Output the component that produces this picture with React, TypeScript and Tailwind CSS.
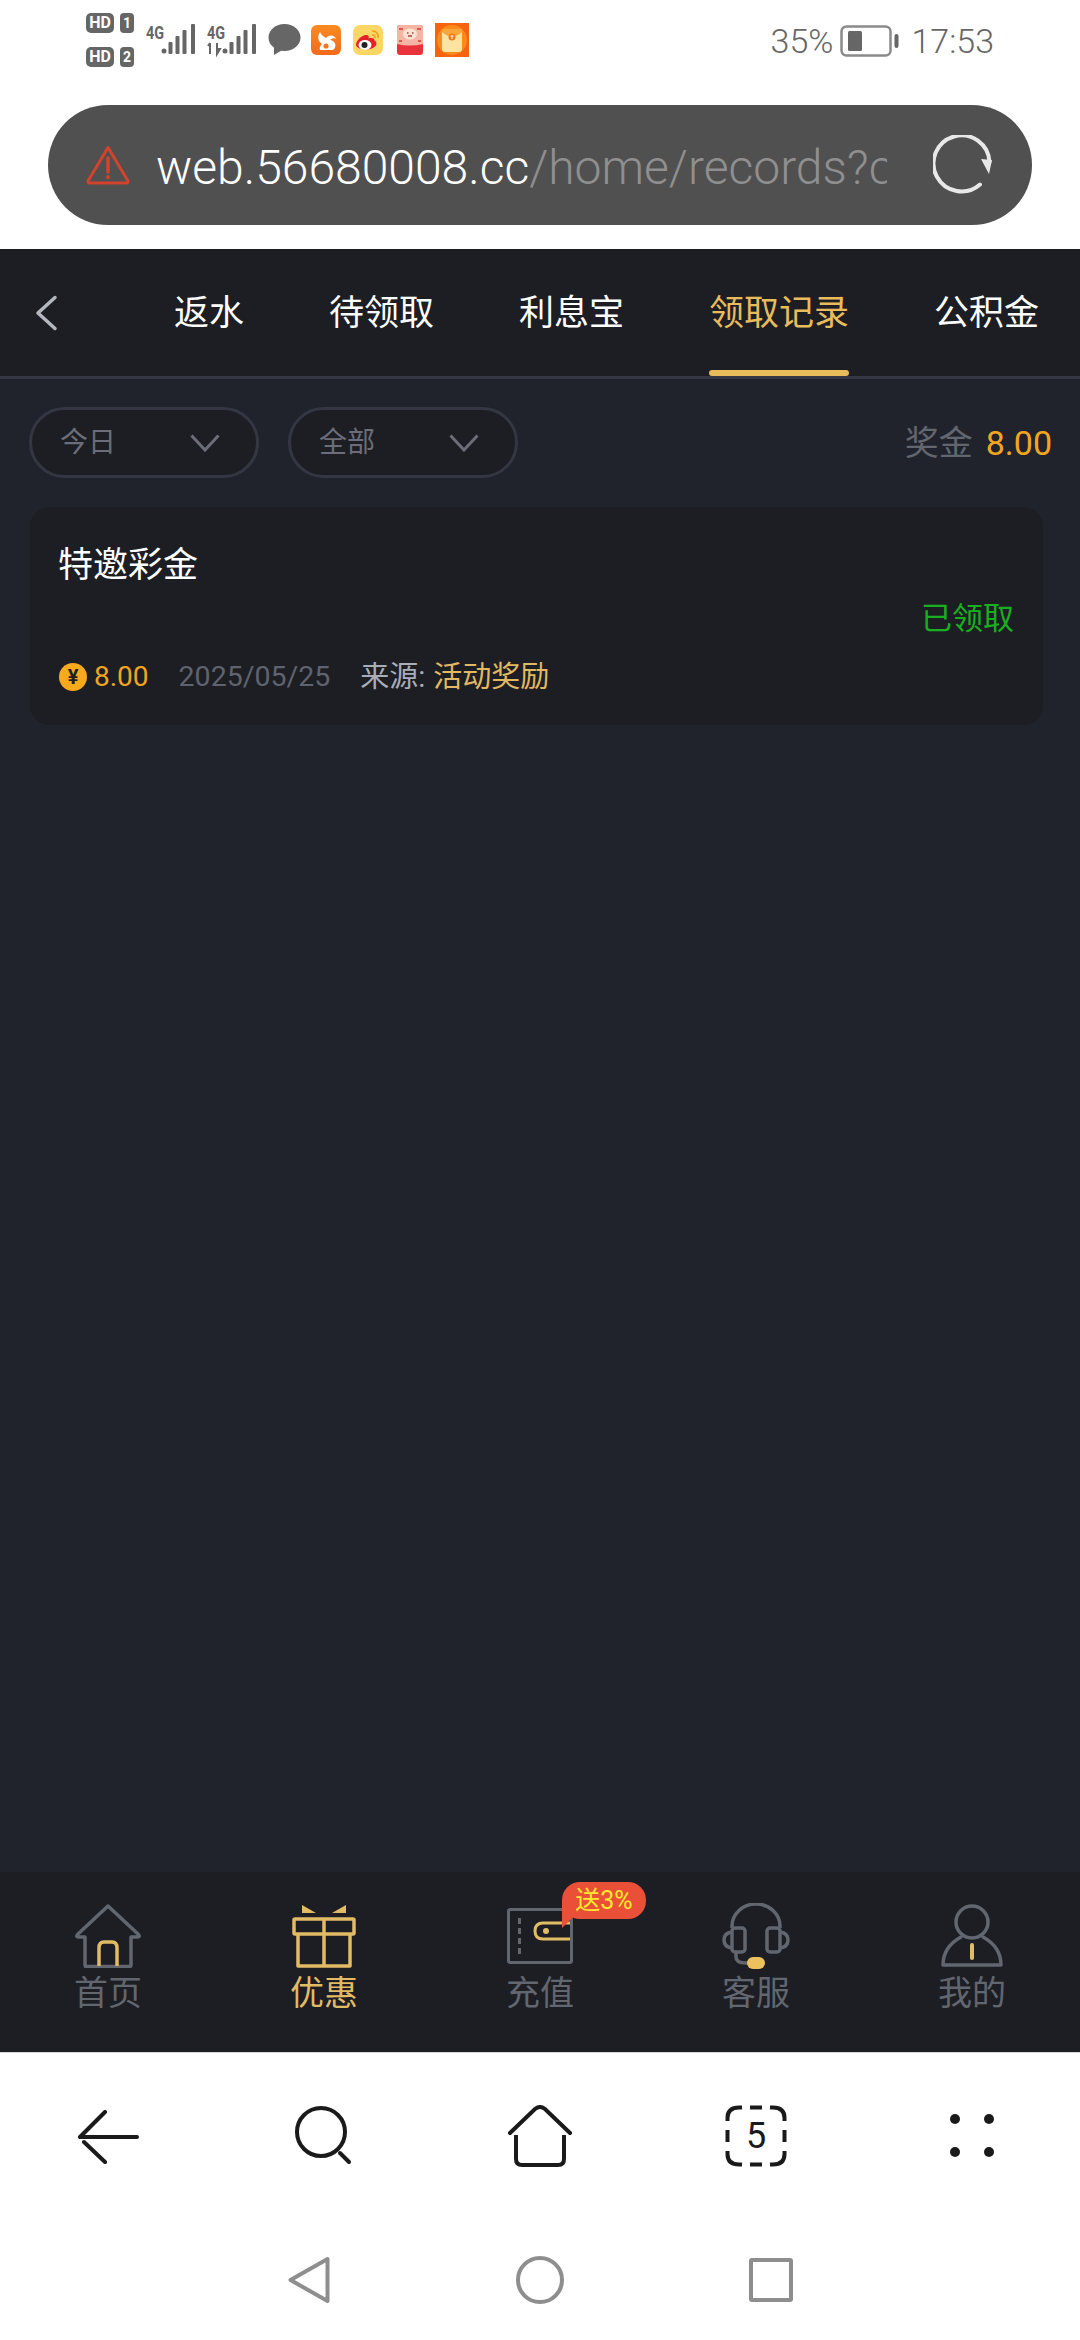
import type { ReactNode } from 'react';

const TABS = [
  { label: '返水' },
  { label: '待领取' },
  { label: '利息宝' },
  { label: '领取记录', active: true },
  { label: '公积金' },
];

function SimTag({ sim }: { sim: string }) {
  return (
    <div className="flex gap-[6px]">
      <span className="flex h-[20px] w-[28px] items-center justify-center rounded-[5px] bg-[#666666] text-[16px] font-bold leading-none text-white">
        HD
      </span>
      <span className="flex h-[20px] w-[14px] items-center justify-center rounded-[4px] bg-[#666666] text-[14px] font-bold leading-none text-white">
        {sim}
      </span>
    </div>
  );
}

function Signal({ arrows }: { arrows?: boolean }) {
  return (
    <svg width="50" height="38" viewBox="0 0 50 38" className="text-[#666666]">
      <text x="0" y="18" fontSize="19" fontWeight="700" fill="currentColor" textLength="18" lengthAdjust="spacingAndGlyphs">
        4G
      </text>
      {arrows && <path d="M3 22v11M1 25l2-3M10 22v11l3-5h-3" stroke="currentColor" strokeWidth="2" fill="none" />}
      <circle cx="18" cy="30" r="2.5" fill="currentColor" />
      <rect x="22.5" y="21" width="4" height="12" rx="1" fill="currentColor" />
      <rect x="29.5" y="15" width="4" height="18" rx="1" fill="currentColor" />
      <rect x="36.5" y="9" width="4" height="24" rx="1" fill="currentColor" />
      <rect x="45" y="3" width="4" height="30" rx="1" fill="currentColor" />
    </svg>
  );
}

function MessageBubble() {
  return (
    <svg width="33" height="32" viewBox="0 0 33 32">
      <ellipse cx="16.5" cy="13.5" rx="16" ry="13.5" fill="#666666" />
      <path d="M6 22l0 9 10-6z" fill="#666666" />
    </svg>
  );
}

function UcLogo() {
  return (
    <svg width="30" height="30" viewBox="0 0 30 30">
      <defs>
        <linearGradient id="uc" x1="0" y1="0" x2="0" y2="1">
          <stop offset="0" stopColor="#f98b22" />
          <stop offset="1" stopColor="#f26a1b" />
        </linearGradient>
      </defs>
      <rect width="30" height="30" rx="6" fill="url(#uc)" />
      <path d="M9 7c-3 5-2 9 2 12-2 2-3 4-2 6h13c4-3 3-9-3-10 2-2 5-2 6-1-1-4-7-5-10-1-2-1-5-3-6-6z" fill="#fff" />
      <circle cx="15" cy="21" r="2.6" fill="#f4761e" />
    </svg>
  );
}

function WeiboLogo() {
  return (
    <svg width="30" height="30" viewBox="0 0 30 30">
      <rect width="30" height="30" rx="7" fill="#fdd766" />
      <path d="M3 20c0-5 7-11 11-10 2 .5 2 2 1.500 3.500 3-1 6-.5 6 2 1 .5 2 1.500 2 3 0 3-5 6-10 6s-10-1.500-10.500-4.500z" fill="#e6202a" />
      <ellipse cx="12" cy="20" rx="6.500" ry="5" fill="#fff" />
      <circle cx="11.500" cy="20" r="3" fill="#222" />
      <path d="M19 6c4-.5 7 3 6 7M19 10c2-.3 3.500 1.200 3 3" stroke="#f29a1f" strokeWidth="1.600" fill="none" />
    </svg>
  );
}

function PacketLogo() {
  return (
    <svg width="26" height="30" viewBox="0 0 26 30">
      <rect width="26" height="30" rx="3" fill="#e9333c" />
      <path d="M0 3a3 3 0 0 1 3-3h20a3 3 0 0 1 3 3v16q-13 3-26 0z" fill="#f4b5a4" />
      <ellipse cx="13" cy="9" rx="7" ry="5.500" fill="#fbe3d4" />
      <path d="M10 8h1.500M15 8h1.500M11 11h4" stroke="#a8443a" strokeWidth="1.400" />
      <path d="M2 4h4M20 4h4M2 16h3M21 16h3" stroke="#d33a35" strokeWidth="1.600" />
    </svg>
  );
}

function EnvelopeLogo() {
  return (
    <svg width="34" height="34" viewBox="0 0 34 34">
      <rect width="34" height="34" fill="#f6640f" />
      <circle cx="17" cy="17" r="15" fill="#f98a1c" />
      <rect x="7" y="6" width="20" height="23" rx="3" fill="#fde3a2" />
      <path d="M7 9q10 9 20 0V8a2 2 0 0 0-2-2H9a2 2 0 0 0-2 2z" fill="#f8a53a" />
      <circle cx="17" cy="14" r="3.500" fill="#ee7a16" />
      <path d="M15.500 13h3M17 13v3" stroke="#fff" strokeWidth="1" />
    </svg>
  );
}

function StatusBar() {
  return (
    <div className="flex h-[80px] items-center justify-between pl-[86px] pr-[86px]">
      <div className="flex items-center">
        <div className="flex flex-col gap-[14px]">
          <SimTag sim="1" />
          <SimTag sim="2" />
        </div>
        <div className="ml-[12px] flex items-center gap-[11px]">
          <Signal />
          <Signal arrows />
        </div>
        <div className="ml-[11px] flex items-center">
          <MessageBubble />
          <div className="ml-[10px]"><UcLogo /></div>
          <div className="ml-[12px]"><WeiboLogo /></div>
          <div className="ml-[14px]"><PacketLogo /></div>
          <div className="ml-[12px]"><EnvelopeLogo /></div>
        </div>
      </div>
      <div className="mt-[2px] flex items-center text-[34px] font-light leading-none text-[#666666]">
        <span>35%</span>
        <svg width="59" height="32" viewBox="0 0 59 32" className="ml-[7px]">
          <rect x="1.500" y="1.500" width="49" height="29" rx="5" fill="none" stroke="#8a8a8a" strokeWidth="2.500" />
          <rect x="8" y="6" width="14" height="20" rx="1.500" fill="#666666" />
          <rect x="54.500" y="9" width="4" height="14" rx="2" fill="#666666" />
        </svg>
        <span className="ml-[12px]">17:53</span>
      </div>
    </div>
  );
}

function AddressBar() {
  return (
    <div className="px-[48px] pb-[24px] pt-[25px]">
      <div className="flex h-[120px] items-center rounded-full bg-[#505050] pl-[38px] pr-[39px]">
        <svg width="44" height="40" viewBox="0 0 44 40" className="shrink-0">
          <path d="M22 2.500 42 36a1.500 1.500 0 0 1-1.300 2H3.300A1.500 1.500 0 0 1 2 36z" fill="none" stroke="#d2432e" strokeWidth="3" strokeLinejoin="round" />
          <path d="M22 13v14" stroke="#d2432e" strokeWidth="3.500" strokeLinecap="round" />
          <circle cx="22" cy="32" r="2" fill="#d2432e" />
        </svg>
        <div className="ml-[26px] mt-[5px] w-[731px] overflow-hidden whitespace-nowrap text-[48px] font-light leading-[56px]">
          <span className="text-white">web.56680008.cc</span>
          <span className="text-[#8f8f8f]">/home/records?c</span>
        </div>
        <svg width="60" height="60" viewBox="0 0 60 60" className="ml-auto shrink-0">
          <path d="M47 49.500A28 28 0 1 1 56.500 27" fill="none" stroke="#e8e8e8" strokeWidth="4" strokeLinecap="round" />
          <path d="M48 24l11 1-3 14z" fill="#e8e8e8" />
        </svg>
      </div>
    </div>
  );
}

function TabHeader() {
  return (
    <header className="flex h-[130px] shrink-0 items-stretch overflow-hidden border-b-[3px] border-[#343743] bg-[#1c1e24]">
      <div className="flex w-[174px] shrink-0 items-center pl-[35px]">
        <svg width="23" height="36" viewBox="0 0 23 36">
          <path d="M20 2.500 3 18l17 15.500" fill="none" stroke="#b4b7bf" strokeWidth="3.500" strokeLinecap="round" strokeLinejoin="round" />
        </svg>
      </div>
      <nav className="flex gap-[85px]">
        {TABS.map((tab) => (
          <div
            key={tab.label}
            className={`relative flex shrink-0 items-center whitespace-nowrap pt-[2px] text-[35px] leading-none ${
              tab.active ? 'text-[#e8bb5b]' : 'text-white'
            }`}
          >
            {tab.label}
            {tab.active && <span className="absolute bottom-0 left-0 h-[6px] w-full rounded-full bg-[#e8bb5b]" />}
          </div>
        ))}
      </nav>
    </header>
  );
}

function FilterPill({ label }: { label: string }) {
  return (
    <div className="flex h-[71px] w-[230px] items-center justify-between rounded-full border-[3px] border-[#343743] bg-[#1c1e24] pl-[28px] pr-[36px]">
      <span className="text-[28px] leading-none text-[#6b6e78]">{label}</span>
      <svg width="30" height="18" viewBox="0 0 30 18">
        <path d="M1.500 1.500 15 16 28.500 1.500" fill="none" stroke="#6b6e78" strokeWidth="3" />
      </svg>
    </div>
  );
}

function RecordCard() {
  return (
    <div className="ml-[30px] mr-[37px] mt-[29px] h-[218px] rounded-[20px] bg-[#1c1e24] pl-[28px] pr-[29px] pt-[39px]">
      <div className="text-[35px] leading-[40px] text-white">特邀彩金</div>
      <div className="mt-[13px] text-right text-[31px] leading-[40px] text-[#19b01f]">已领取</div>
      <div className="mt-[20px] flex items-center text-[28px] leading-[36px]">
        <span className="ml-[1px] flex h-[28px] w-[28px] items-center justify-center rounded-full bg-[#f9a91c] text-[20px] font-bold leading-none text-[#1c1e24]">
          ¥
        </span>
        <span className="ml-[7px] text-[#f2a51f]">8.00</span>
        <span className="ml-[30px] text-[28.5px] text-[#5f636d]">2025/05/25</span>
        <span className="ml-[30px] text-[29px] text-[#a9adb8]">来源:</span>
        <span className="ml-[8px] text-[29px] text-[#e2b862]">活动奖励</span>
      </div>
    </div>
  );
}

function NavItem({ label, active, children }: { label: string; active?: boolean; children: ReactNode }) {
  return (
    <div className="relative flex flex-col items-center pt-[32px]">
      <div className="flex h-[64px] items-center justify-center">{children}</div>
      <span className={`mt-[5px] text-[34px] leading-[40px] ${active ? 'text-[#e2bb65]' : 'text-[#62666f]'}`}>{label}</span>
    </div>
  );
}

function BottomTabs() {
  const grey = '#62666f';
  const gold = '#e2bb65';
  return (
    <div className="grid h-[180px] shrink-0 grid-cols-5 bg-[#1c1e24]">
      <NavItem label="首页">
        <svg width="68" height="64" viewBox="0 0 68 64">
          <path d="M11 61V33H4.500q-3 0-1-2.500L34 2l30.500 28.500q2 2.500-1 2.500H57v28q0 1.500-1.500 1.500h-43Q11 63 11 61z" fill="none" stroke={grey} strokeWidth="3.500" strokeLinejoin="round" />
          <path d="M25 62V44q0-6 5-6h8q5 0 5 6v18" fill="none" stroke={gold} strokeWidth="3.500" />
        </svg>
      </NavItem>
      <NavItem label="优惠" active>
        <svg width="64" height="64" viewBox="0 0 64 64">
          <path d="M10 9V1l14 8zM54 9V1L40 9z" fill={gold} />
          <rect x="2" y="15" width="60" height="15" rx="1" fill="none" stroke={gold} strokeWidth="3.500" />
          <path d="M6 30v32h52V30M32 15v47" fill="none" stroke={gold} strokeWidth="3.500" strokeLinejoin="round" />
        </svg>
      </NavItem>
      <NavItem label="充值">
        <svg width="66" height="56" viewBox="0 0 66 56">
          <rect x="1.500" y="1.500" width="63" height="53" rx="2" fill="none" stroke={grey} strokeWidth="3" />
          <path d="M12.500 10v36" stroke={grey} strokeWidth="3" strokeDasharray="6 4" />
          <path d="M63 15H36q-8 0-8 8t8 8h27" fill="none" stroke={gold} strokeWidth="3" />
          <circle cx="39" cy="23" r="3" fill={gold} />
        </svg>
        <span className="absolute left-[130px] top-[10px] flex h-[37px] w-[84px] items-center justify-center rounded-[18px] bg-[#ea4f38] text-[25px] leading-none text-[#ffe92e]">
          <span className="absolute left-0 top-[20px] h-[26px] w-[16px] bg-[#ea4f38] [clip-path:polygon(0_0,100%_0,100%_40%,0_100%)]" />
          <span className="relative">送3%</span>
        </span>
      </NavItem>
      <NavItem label="客服">
        <svg width="68" height="66" viewBox="0 0 68 66">
          <path d="M10 25v-2a24 22 0 0 1 48 0v2" fill="none" stroke={grey} strokeWidth="3.500" />
          <rect x="10" y="25" width="13" height="24" rx="3" fill="none" stroke={grey} strokeWidth="3.500" />
          <rect x="45" y="25" width="13" height="24" rx="3" fill="none" stroke={grey} strokeWidth="3.500" />
          <path d="M10 29q-8 1-8 8t8 8M58 29q8 1 8 8t-8 8M14 49v5q0 6 10 6h3" fill="none" stroke={grey} strokeWidth="3.500" />
          <rect x="25" y="54" width="18" height="12" rx="6" fill="#eec15f" />
        </svg>
      </NavItem>
      <NavItem label="我的">
        <svg width="62" height="64" viewBox="0 0 62 64">
          <circle cx="31" cy="18" r="16" fill="none" stroke={grey} strokeWidth="3.500" />
          <path d="M2 61q0-18 18-28M60 61q0-18-18-28M2 61h58" fill="none" stroke={grey} strokeWidth="3.500" strokeLinecap="round" />
          <rect x="29" y="39" width="4" height="17" rx="2" fill={gold} />
        </svg>
      </NavItem>
    </div>
  );
}

function BrowserBar() {
  const stroke = '#1a1a1a';
  return (
    <div className="grid h-[168px] shrink-0 grid-cols-5 items-center justify-items-center border-t border-[#d8d8d8] bg-white">
      <svg width="62" height="54" viewBox="0 0 62 54">
        <path d="M28 2 3 27h57M7 32 28 52" fill="none" stroke={stroke} strokeWidth="4" strokeLinecap="round" strokeLinejoin="round" />
      </svg>
      <svg width="62" height="60" viewBox="0 0 62 60" className="mt-[-4px]">
        <circle cx="28" cy="27" r="24" fill="none" stroke={stroke} strokeWidth="4" />
        <path d="M47 48 56 57" stroke={stroke} strokeWidth="4" strokeLinecap="round" />
      </svg>
      <svg width="66" height="62" viewBox="0 0 66 62" className="mt-[-2px]">
        <path d="M3 28 28 4q5-4 10 0l25 24" fill="none" stroke={stroke} strokeWidth="4" strokeLinecap="round" />
        <path d="M9 30v24q0 6 6 6h36q6 0 6-6V30" fill="none" stroke={stroke} strokeWidth="4" />
      </svg>
      <div className="relative mt-[-2px] flex h-[62px] w-[62px] items-center justify-center">
        <svg width="62" height="62" viewBox="0 0 62 62" className="absolute inset-0">
          <path
            d="M2.500 16V13Q2.500 2.500 14 2.500h3M45 2.500h3Q59.500 2.500 59.500 13v3M59.500 46v3Q59.500 59.500 48 59.500h-3M17 59.500h-3Q2.500 59.500 2.500 49v-3M25 2.500h12M25 59.500h12M2.500 25v12M59.500 25v12"
            fill="none"
            stroke={stroke}
            strokeWidth="4"
          />
        </svg>
        <span className="text-[36px] leading-none text-[#1a1a1a]">5</span>
      </div>
      <div className="mt-[-2px] grid grid-cols-2 gap-x-[24px] gap-y-[23px]">
        <span className="h-[10px] w-[10px] rounded-full bg-[#1a1a1a]" />
        <span className="h-[10px] w-[10px] rounded-full bg-[#1a1a1a]" />
        <span className="h-[10px] w-[10px] rounded-full bg-[#1a1a1a]" />
        <span className="h-[10px] w-[10px] rounded-full bg-[#1a1a1a]" />
      </div>
    </div>
  );
}

function SystemNav() {
  const stroke = '#8e8e8e';
  return (
    <div className="mx-auto grid h-[120px] w-[693px] shrink-0 grid-cols-3 items-center justify-items-center">
      <svg width="42" height="48" viewBox="0 0 42 48">
        <path d="M39.500 3 2.500 24l37 21z" fill="none" stroke={stroke} strokeWidth="4" strokeLinejoin="round" />
      </svg>
      <span className="h-[48px] w-[48px] rounded-full border-4 border-[#8e8e8e]" />
      <span className="h-[44px] w-[44px] rounded-[3px] border-4 border-[#8e8e8e]" />
    </div>
  );
}

export default function App() {
  return (
    <div className="flex h-[2340px] w-[1080px] flex-col overflow-hidden bg-white font-['Roboto','Noto_Sans_CJK_SC',sans-serif]">
      <StatusBar />
      <AddressBar />
      <TabHeader />
      <main className="flex-1 bg-[#20232b]">
        <div className="flex items-center pl-[29px] pr-[28px] pt-[28px]">
          <FilterPill label="今日" />
          <div className="ml-[29px]">
            <FilterPill label="全部" />
          </div>
          <div className="ml-auto flex items-center text-[34px] leading-none">
            <span className="text-[#62666f]">奖金</span>
            <span className="ml-[13px] text-[#f2a51f]">8.00</span>
          </div>
        </div>
        <RecordCard />
      </main>
      <BottomTabs />
      <BrowserBar />
      <SystemNav />
    </div>
  );
}
